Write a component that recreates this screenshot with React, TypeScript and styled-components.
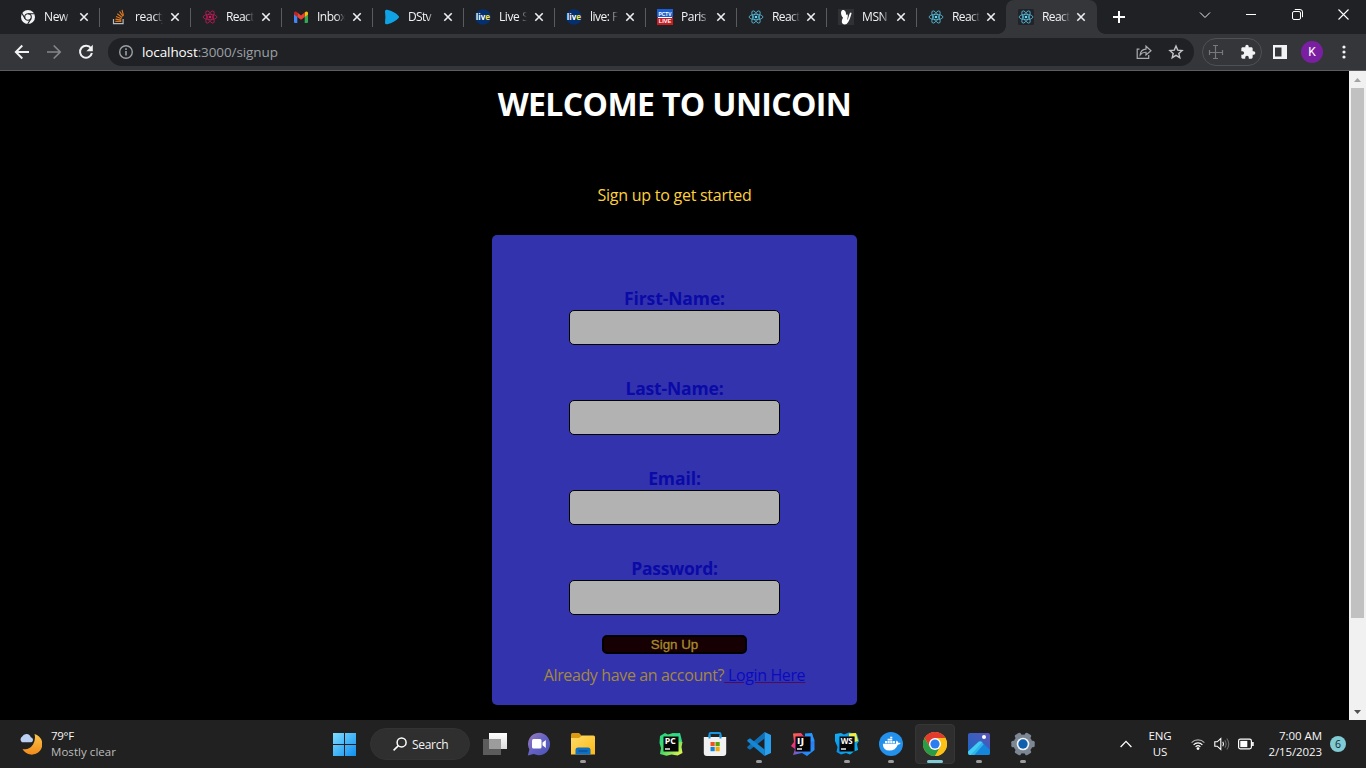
import React from "react";
import styled, { createGlobalStyle } from "styled-components";

const GlobalStyle = createGlobalStyle`
  * { box-sizing: border-box; }
  html, body { margin: 0; padding: 0; background: #000; overflow: hidden; }
  body { font-family: "Open Sans", "Noto Sans", sans-serif; }
  svg { display: block; flex: none; }
`;

const Screen = styled.div`
  width: 1366px;
  height: 768px;
  display: flex;
  flex-direction: column;
  overflow: hidden;
`;

/* ---------- browser tab strip ---------- */

const TabStrip = styled.div`
  height: 34px;
  flex: none;
  display: flex;
  padding-left: 9px;
  background: #202124;
`;

const Tab = styled.div<{ $width: number; $active?: boolean; $divider?: boolean }>`
  position: relative;
  width: ${(p) => p.$width}px;
  height: 34px;
  flex: none;
  display: flex;
  align-items: center;
  margin-left: ${(p) => (p.$active ? -1 : 0)}px;
  padding-left: ${(p) => (p.$active ? 12 : 11)}px;
  border-radius: 8px 8px 0 0;
  background: ${(p) => (p.$active ? "#35363a" : "transparent")};

  &::after {
    content: "";
    position: absolute;
    right: 0;
    top: 8px;
    width: 1px;
    height: 19px;
    background: ${(p) => (p.$divider ? "#5a5b5f" : "transparent")};
  }
`;

const TabFoot = styled.i<{ $side: "left" | "right" }>`
  position: absolute;
  bottom: 0;
  ${(p) => p.$side}: -8px;
  width: 8px;
  height: 8px;
  background: radial-gradient(
    circle at ${(p) => (p.$side === "left" ? "0 0" : "8px 0")},
    transparent 7.5px,
    #35363a 8px
  );
`;

const TabTitle = styled.span<{ $spacing?: number }>`
  width: 32px;
  margin-left: 8px;
  flex: none;
  white-space: nowrap;
  font-size: 12px;
  line-height: 18px;
  letter-spacing: ${(p) => p.$spacing ?? -0.3}px;
  color: #f1f3f4;
  mask-image: linear-gradient(90deg, #000 19px, transparent 28px);
`;

const TabClose = styled.span<{ $tight: boolean }>`
  margin-left: ${(p) => (p.$tight ? 2 : 3)}px;
`;

const NewTab = styled.div`
  width: 28px;
  margin-left: 8px;
  display: grid;
  place-items: center;
`;

const WindowControls = styled.div`
  margin-left: auto;
  height: 29px;
  display: grid;
  grid-template-columns: repeat(4, 46px);
  align-items: center;
  justify-items: center;
`;

/* ---------- toolbar ---------- */

const Toolbar = styled.div`
  height: 37px;
  flex: none;
  display: flex;
  align-items: center;
  padding: 0 6px;
  background: #35363a;
  border-bottom: 1px solid #5c5c60;
`;

const ToolSlot = styled.div<{ $w?: number }>`
  width: ${(p) => p.$w ?? 32}px;
  height: 28px;
  flex: none;
  display: grid;
  place-items: center;
`;

const Omnibox = styled.div`
  width: 1086px;
  height: 28px;
  margin-left: 6px;
  flex: none;
  display: flex;
  align-items: center;
  padding: 0 2px 0 10px;
  border-radius: 14px;
  background: #202124;
`;

const Address = styled.span`
  flex: 1;
  margin-left: 8px;
  font-size: 13.5px;
  letter-spacing: -0.1px;
  color: #9aa0a6;
  b { font-weight: 400; color: #fff; }
`;

const Extensions = styled.div`
  width: 60px;
  height: 28px;
  margin: 0 2px 0 8px;
  flex: none;
  display: flex;
  align-items: center;
  justify-content: space-between;
  padding: 0 5px;
  border: 1px solid #505155;
  border-radius: 14px;
`;

const Avatar = styled.div`
  width: 22px;
  height: 22px;
  border-radius: 50%;
  background: #7b1fa2;
  color: #fff;
  font: 400 12px/22px Roboto, sans-serif;
  text-align: center;
`;

/* ---------- page ---------- */

const Viewport = styled.div`
  height: 649px;
  flex: none;
  display: flex;
  background: #000;
`;

const Page = styled.main`
  flex: 1;
  display: flex;
  flex-direction: column;
  align-items: center;
`;

const Heading = styled.h1`
  margin: 11px 0 0;
  height: 44px;
  font-size: 32px;
  line-height: 44px;
  font-weight: 700;
  letter-spacing: -0.63px;
  white-space: nowrap;
  color: #fff;
`;

const Tagline = styled.p`
  margin: 57px 0 0;
  height: 24px;
  font-size: 16px;
  line-height: 24px;
  letter-spacing: -0.25px;
  color: #ffd03a;
`;

const Card = styled.form`
  width: 365px;
  height: 470px;
  margin-top: 28px;
  padding-top: 51px;
  display: flex;
  flex-direction: column;
  align-items: center;
  border-radius: 5px;
  background: #3333ae;
`;

const Field = styled.label`
  height: 90px;
  display: flex;
  flex-direction: column;
  align-items: center;
  font-size: 17.5px;
  line-height: 24px;
  font-weight: 700;
  color: #0a0aa7;
`;

const FieldName = styled.span<{ $spacing: number }>`
  letter-spacing: ${(p) => p.$spacing}px;
`;

const Input = styled.input`
  width: 211px;
  height: 35px;
  flex: none;
  border: 1px solid #000;
  border-radius: 5px;
  background: #b2b2b2;
  outline: none;
`;

const SubmitButton = styled.button`
  width: 145px;
  height: 19px;
  margin-top: -11px;
  padding: 0;
  border: 2px solid #000;
  border-radius: 5px;
  background: #160003;
  color: #a88b2b;
  font: 400 13.33px/15px "Liberation Sans", sans-serif;
  -webkit-text-stroke: 0.3px #a88b2b;
`;

const Prompt = styled.p`
  margin: 9px 0 0;
  font-size: 16px;
  line-height: 24px;
  letter-spacing: -0.37px;
  white-space: pre;
  color: #a3893f;
`;

const LoginLink = styled.a`
  color: #0a0abf;
  text-decoration: underline;
  text-decoration-color: #4c0d56;
`;

const ScrollTrack = styled.div`
  width: 17px;
  flex: none;
  display: flex;
  flex-direction: column;
  align-items: center;
  background: #f1f1f1;
`;

const ScrollArrow = styled.div`
  height: 17px;
  display: grid;
  place-items: center;
`;

const ScrollThumb = styled.div`
  width: 13px;
  height: 530px;
  margin-bottom: auto;
  background: #c1c1c1;
`;

/* ---------- taskbar ---------- */

const Taskbar = styled.footer`
  height: 48px;
  flex: none;
  display: flex;
  align-items: center;
  background: #212121;
  color: #f4f4f4;
`;

const Weather = styled.div`
  width: 322px;
  flex: none;
  display: flex;
  align-items: center;
  padding-left: 18px;
  gap: 9px;
`;

const Stack = styled.div<{ $align?: string }>`
  display: flex;
  flex-direction: column;
  align-items: ${(p) => p.$align ?? "flex-start"};
  font-size: 11.5px;
  line-height: 16px;
  white-space: nowrap;
`;

const Line = styled.span<{ $spacing?: number; $dim?: boolean }>`
  letter-spacing: ${(p) => p.$spacing ?? -0.2}px;
  color: ${(p) => (p.$dim ? "#bdbdbd" : "#f6f6f6")};
`;

const AppSlot = styled.div<{ $open?: boolean; $focused?: boolean }>`
  position: relative;
  width: 44px;
  height: 48px;
  flex: none;
  display: grid;
  place-items: center;

  &::before {
    content: "";
    position: absolute;
    inset: 4px 2px;
    border-radius: 4px;
    background: ${(p) => (p.$focused ? "#2e2e2e" : "transparent")};
    border: 1px solid ${(p) => (p.$focused ? "#363636" : "transparent")};
  }
  &::after {
    content: "";
    position: absolute;
    bottom: 5px;
    left: 50%;
    transform: translateX(-50%);
    width: ${(p) => (p.$focused ? 16 : 6)}px;
    height: 3px;
    border-radius: 2px;
    background: ${(p) => (p.$focused ? "#80cbd4" : p.$open ? "#9b9b9b" : "transparent")};
  }
  svg { position: relative; }
`;

const SearchPill = styled.div`
  width: 100px;
  height: 32px;
  margin: 0 3px 0 4px;
  flex: none;
  display: flex;
  align-items: center;
  gap: 5px;
  padding-left: 22px;
  border-radius: 16px;
  background: #2f2f2f;
  border: 1px solid #333;
  font-size: 12px;
  letter-spacing: -0.3px;
`;

const Tray = styled.div`
  margin-left: auto;
  display: flex;
  align-items: center;
  padding-right: 20px;
`;

const TrayCell = styled.div<{ $w: number }>`
  width: ${(p) => p.$w}px;
  display: grid;
  place-items: center;
`;

const Clock = styled(Stack)`
  width: 60px;
`;

const Badge = styled.div`
  width: 16px;
  height: 16px;
  margin-left: 8px;
  border-radius: 50%;
  background: #80cbd4;
  color: #12292c;
  font-size: 10.5px;
  line-height: 16px;
  text-align: center;
`;

/* ---------- favicons ---------- */

const ReactMark = ({ color, dark }: { color: string; dark?: boolean }) => (
  <svg width="16" height="16" viewBox="0 0 16 16">
    {dark && <rect width="16" height="16" rx="1.5" fill="#20232a" />}
    <g fill="none" stroke={color} strokeWidth="0.8" opacity="0.85">
      {[0, 60, 120].map((a) => (
        <ellipse key={a} cx="8" cy="8" rx="6.9" ry="2.7" transform={`rotate(${a} 8 8)`} />
      ))}
    </g>
    <circle cx="8" cy="8" r="1.3" fill={color} />
  </svg>
);

const ChromeMono = () => (
  <svg width="16" height="16" viewBox="0 0 16 16">
    <circle cx="8" cy="8" r="7" fill="#f1f3f4" />
    <g stroke="#202124" strokeWidth="1.1" fill="none">
      <circle cx="8" cy="8" r="3.3" />
      <path d="M8 4.7h6.4M5.1 9.6L1.9 4.2M10.9 9.6L7.7 15" />
    </g>
    <circle cx="8" cy="8" r="2.1" fill="#f1f3f4" />
  </svg>
);

const StackMark = () => (
  <svg width="16" height="16" viewBox="0 0 16 16" fill="none">
    <path d="M2.5 10v4.6h9.6V10" stroke="#bcbbbb" strokeWidth="1.2" />
    <path
      d="M4.3 12.4h6M4.4 10.1l5.9 1M5 7.6l5.5 2.2M6.3 4.8l4.8 3.7M8.5 2.4l3.6 4.9M11 .9l1.5 5.8"
      stroke="#e07a20"
      strokeWidth="1.1"
    />
  </svg>
);

const GmailMark = () => (
  <svg width="16" height="16" viewBox="0 0 16 16">
    <path d="M1 4.2L4.3 6.7V14H2.1A1.1 1.1 0 0 1 1 12.9z" fill="#4285f4" />
    <path d="M15 4.2l-3.3 2.5V14h2.2a1.1 1.1 0 0 0 1.1-1.1z" fill="#34a853" />
    <path d="M11.7 3.6l1-.8A1.5 1.5 0 0 1 15 4v1.4l-3.3 2.5z" fill="#fbbc04" />
    <path d="M4.3 7.9V3.6L8 6.4l3.7-2.8v4.3L8 10.7z" fill="#ea4335" />
    <path d="M1 4a1.5 1.5 0 0 1 2.3-1.2l1 .8v4.3L1 5.4z" fill="#c5221f" />
  </svg>
);

const DstvMark = () => (
  <svg width="16" height="16" viewBox="0 0 16 16">
    <path d="M1 2.3Q1 .2 3.2.8Q10.5 2.5 14.6 6.9Q15.6 8 14.6 9.1Q10.5 13.7 3.2 15.3Q1 15.7 1 13.7Q1.8 8 1 2.3z" fill="#0fa3e6" />
  </svg>
);

const LiveMark = () => (
  <svg width="16" height="16" viewBox="0 0 16 16">
    <circle cx="8" cy="8" r="7.8" fill="#04306f" />
    <text x="0.8" y="10.8" fontSize="8" fontWeight="700" fontFamily="Open Sans" fill="#fff" textLength="14.2" lengthAdjust="spacingAndGlyphs">
      liv<tspan fill="#f2e23a">e</tspan>
    </text>
  </svg>
);

const PctvMark = () => (
  <svg width="16" height="16" viewBox="0 0 16 16">
    <rect width="16" height="8.5" fill="#1c5fd0" />
    <rect y="8.5" width="16" height="7.5" fill="#c41d22" />
    <rect x="1" y="8" width="14" height="1" fill="#fff" />
    <text x="1.5" y="7" fontSize="5.5" fontWeight="700" fontFamily="Liberation Sans" fill="#fff" textLength="13" lengthAdjust="spacingAndGlyphs">PCTV</text>
    <text x="1.8" y="13.6" fontSize="5.5" fontWeight="700" fontFamily="Liberation Sans" fill="#fff" textLength="12.5" lengthAdjust="spacingAndGlyphs">LIVE</text>
  </svg>
);

const MsnMark = () => (
  <svg width="16" height="16" viewBox="0 0 16 16">
    <rect width="16" height="16" fill="#303134" />
    <path d="M4.6 1C7 .6 8.4 3.2 8 6.3C8.8 4.6 10 4.9 9.8 7.3L9.2 11.2C10.7 9.6 10.700 6.200 11.800 4.300C12.800 2.800 14 3.700 13.300 5.200C12.300 8.500 11.200 12.600 8.600 15C6.600 16 4 15.300 3.800 13.100C3.700 11.200 4.600 9.800 5 8.500C2.800 6.800 2.200 1.800 4.600 1z" fill="#fff" />
  </svg>
);

const CloseGlyph = () => (
  <svg width="10" height="10" viewBox="0 0 10 10">
    <path d="M1.3 1.3l7.4 7.4M8.7 1.3L1.3 8.7" stroke="#eceef0" strokeWidth="1.6" />
  </svg>
);

type TabInfo = { icon: React.ReactNode; title: string; width: number; spacing?: number };

const tabs: TabInfo[] = [
  { icon: <ChromeMono />, title: "New", width: 91, spacing: -0.4 },
  { icon: <StackMark />, title: "reactj", width: 91, spacing: -0.3 },
  { icon: <ReactMark color="#d81b60" />, title: "React", width: 91, spacing: -0.6 },
  { icon: <GmailMark />, title: "Inbox", width: 91, spacing: -0.5 },
  { icon: <DstvMark />, title: "DStv", width: 91, spacing: -0.7 },
  { icon: <LiveMark />, title: "Live S", width: 91, spacing: -0.4 },
  { icon: <LiveMark />, title: "live: F", width: 91, spacing: -0.5 },
  { icon: <PctvMark />, title: "Paris", width: 91, spacing: -0.5 },
  { icon: <ReactMark color="#61dafb" />, title: "React", width: 90, spacing: -0.6 },
  { icon: <MsnMark />, title: "MSN", width: 90, spacing: -0.4 },
  { icon: <ReactMark color="#61dafb" />, title: "React", width: 90, spacing: -0.6 },
  { icon: <ReactMark color="#61dafb" dark />, title: "React", width: 91, spacing: -0.6 },
];

/* ---------- taskbar icons ---------- */

const WindowsIcon = () => (
  <svg width="24" height="24" viewBox="0 0 24 24">
    <defs>
      <linearGradient id="win" x1="0" y1="0" x2="1" y2="1">
        <stop offset="0" stopColor="#7fdcff" />
        <stop offset="1" stopColor="#0e8ff0" />
      </linearGradient>
    </defs>
    <path d="M1 1h11v11H1zM13 1h11v11H13zM1 13h11v11H1zM13 13h11v11H13z" fill="url(#win)" />
  </svg>
);

const TaskViewIcon = () => (
  <svg width="24" height="24" viewBox="0 0 24 24">
    <defs>
      <linearGradient id="tv" x1="0" y1="0" x2="0" y2="1">
        <stop offset="0" stopColor="#fff" />
        <stop offset="1" stopColor="#dcdcdc" />
      </linearGradient>
    </defs>
    <path d="M6 1h18v16H6z" fill="url(#tv)" />
    <path d="M0 7h18v16H0z" fill="#5c5c5c" />
    <path d="M6 7h12v10H6z" fill="#9c9c9c" />
  </svg>
);

const ChatIcon = () => (
  <svg width="24" height="24" viewBox="0 0 24 24">
    <defs>
      <linearGradient id="chat" x1="0" y1="0" x2="1" y2="1">
        <stop offset="0" stopColor="#a07ab8" />
        <stop offset="0.5" stopColor="#6462c4" />
        <stop offset="1" stopColor="#4a50b4" />
      </linearGradient>
    </defs>
    <path d="M12 .8a11.2 11.2 0 1 1-5.2 21.2L.8 23.500l1.600-6A11.200 11.200 0 0 1 12 .8z" fill="url(#chat)" />
    <rect x="5" y="7" width="9.5" height="9.6" rx="1.5" fill="#fff" />
    <path d="M15.500 10.500l3.300-2.600v8l-3.300-2.600z" fill="#fff" />
  </svg>
);

const FolderIcon = () => (
  <svg width="24" height="24" viewBox="0 0 24 24">
    <defs>
      <linearGradient id="fold" x1="0" y1="0" x2="1" y2="1">
        <stop offset="0" stopColor="#ffdc6a" />
        <stop offset="1" stopColor="#fbb916" />
      </linearGradient>
    </defs>
    <path d="M0 2.500Q0 1 1.500 1H8l2.500 2.500V8H0z" fill="#dc9a10" />
    <path d="M0 6h8l3-2.500h11.500Q24 3.500 24 5v17.500H0z" fill="url(#fold)" />
    <path d="M4.500 22.500V18Q4.500 15.500 7 15.500h10Q19.500 15.500 19.500 18v4.500z" fill="#0f6fc0" />
    <path d="M7.500 19h9" stroke="#0a4c94" strokeWidth="1.3" />
  </svg>
);

type JetBrainsProps = { id: string; label: string; labelWidth: number; stops: string[]; accent: string; outline: string };

const JetBrains = ({ id, label, labelWidth, stops, accent, outline }: JetBrainsProps) => (
  <svg width="24" height="24" viewBox="0 0 24 24">
    <defs>
      <linearGradient id={id} x1="0" y1="0" x2="1" y2="1">
        {stops.map((c, i) => (
          <stop key={i} offset={i / (stops.length - 1)} stopColor={c} />
        ))}
      </linearGradient>
    </defs>
    <path d={outline} fill={`url(#${id})`} />
    <path d="M14 1.500l7-.5 2 8-3.500 1V4.500H14z" fill={accent} />
    <path d="M4.500 4.500h15v15h-15z" fill="#050505" />
    <text x="5.7" y="12" fontSize="8" fontWeight="700" fontFamily="Open Sans" fill="#fff" textLength={labelWidth} lengthAdjust="spacingAndGlyphs">
      {label}
    </text>
    <path d="M6 17h5" stroke="#fff" strokeWidth="1.4" />
  </svg>
);

const StoreIcon = () => (
  <svg width="24" height="24" viewBox="0 0 24 24">
    <path d="M6.500 7V2.200Q6.500 1 7.700 1h8.600q1.200 0 1.200 1.200V7" fill="none" stroke="#1897e0" strokeWidth="2" />
    <path d="M.8 5h22.400v16q0 3-3 3H3.800q-3 0-3-3z" fill="#f1f1f1" />
    <path d="M7.500 10h4.200v4.200H7.500z" fill="#f25022" />
    <path d="M12.500 10h4.200v4.200h-4.200z" fill="#57a300" />
    <path d="M7.500 15h4.200v4.200H7.500z" fill="#0a84dc" />
    <path d="M12.500 15h4.200v4.200h-4.200z" fill="#f8a800" />
    <path d="M6.500 6.500V3M17.500 6.500V3" stroke="#1897e0" strokeWidth="2" />
  </svg>
);

const CodeIcon = () => (
  <svg width="24" height="24" viewBox="0 0 24 24">
    <path d="M17.500 6.500L3 17.800 .3 16V14.800L17.500 0z" fill="#0f70b8" />
    <path d="M17.500 17.500L3 6.200.3 8v1.200L17.500 24z" fill="#1486d4" />
    <path d="M17.500 0L24 3v18l-6.500 3z" fill="#29a0ee" />
  </svg>
);

const DockerIcon = () => (
  <svg width="24" height="24" viewBox="0 0 24 24">
    <circle cx="12" cy="12" r="12" fill="#2391ec" />
    <path d="M3.800 11.800h13.300q-.6-1.800.6-3.200 1.300.8 1.500 2.200 1.500-.3 2.500.3-.8 1.500-2.900 1.600-2.300 5.900-8.300 5.900-6.500 0-6.700-6.800z" fill="#fff" />
    <path d="M6 9h2.100v2.200H6zM8.600 9h2.100v2.200H8.600zM11.200 9h2.100v2.200h-2.100zM13.800 9h2.100v2.200h-2.100zM8.600 6.800h4.700v1.700H8.600zM11.200 4.800h2.100v1.500h-2.100z" fill="#fff" />
  </svg>
);

const ChromeIcon = () => (
  <svg width="24" height="24" viewBox="0 0 24 24">
    <circle cx="12" cy="12" r="12" fill="#fbc116" />
    <path d="M12 6h10.400A12 12 0 0 0 1.600 6l5.200 9z" fill="#e33b2e" />
    <path d="M1.600 6A12 12 0 0 0 12 24l5.200-9H6.800z" fill="#2a9b47" />
    <path d="M12 24A12 12 0 0 0 22.400 6H12l5.200 9z" fill="#fbc116" />
    <circle cx="12" cy="12" r="6" fill="#fff" />
    <circle cx="12" cy="12" r="4.6" fill="#2c7df0" />
  </svg>
);

const PhotosIcon = () => (
  <svg width="24" height="24" viewBox="0 0 24 24">
    <defs>
      <linearGradient id="ph" x1="0" y1="1" x2="1" y2="0">
        <stop offset="0" stopColor="#1666c4" />
        <stop offset="1" stopColor="#5b56b8" />
      </linearGradient>
      <clipPath id="phc"><rect x="1" y="1" width="22" height="22" rx="2" /></clipPath>
    </defs>
    <g clipPath="url(#phc)">
      <rect x="1" y="1" width="22" height="22" fill="url(#ph)" />
      <path d="M11 10.500q2.300-2 4.500 0L25 20v5H5z" fill="#1486dc" />
      <path d="M0 20.500L11 10.200q2.200-1.900 4.500.2L3.500 24H0z" fill="#42cdf2" />
      <path d="M3 24L15.200 10.700l1.500 1.500L6.500 24z" fill="#30b4ea" />
    </g>
    <circle cx="17" cy="5" r="2" fill="#fff" />
  </svg>
);

const SettingsIcon = () => (
  <svg width="24" height="24" viewBox="0 0 24 24">
    <g fill="#7c8793">
      <circle cx="12" cy="12" r="9.6" />
      {[0, 60, 120].map((a) => (
        <rect key={a} x="0.3" y="8.7" width="23.4" height="6.6" rx="1.6" transform={`rotate(${a} 12 12)`} />
      ))}
    </g>
    <circle cx="12" cy="12" r="6.3" fill="#f0f3f6" />
    <circle cx="12" cy="12" r="4.7" fill="#0e5fae" />
  </svg>
);

const MoonIcon = () => (
  <svg width="24" height="24" viewBox="0 0 24 24">
    <defs>
      <linearGradient id="moon" x1="0" y1="0" x2="0" y2="1">
        <stop offset="0" stopColor="#ffc64a" />
        <stop offset="1" stopColor="#f08a1a" />
      </linearGradient>
    </defs>
    <path d="M16.500 2A10.500 10.500 0 1 1 4.500 17Q11 18.500 15 12.500Q18 7 16.500 2z" fill="url(#moon)" />
    <path d="M4 10.200a3.300 3.300 0 0 1 .2-5.600 4.600 4.600 0 0 1 8.600.6 2.600 2.600 0 0 1 .5 5z" fill="#bcd0f3" />
  </svg>
);

const fields = [
  { name: "First-Name:", type: "text", spacing: -0.1 },
  { name: "Last-Name:", type: "text", spacing: -0.15 },
  { name: "Email:", type: "email", spacing: -0.1 },
  { name: "Password:", type: "password", spacing: -0.25 },
];

export default function App() {
  return (
    <Screen>
      <GlobalStyle />
      <TabStrip>
        {tabs.map((t, i) => {
          const active = i === tabs.length - 1;
          return (
            <Tab key={i} $width={t.width} $active={active} $divider={i < tabs.length - 2}>
              {active && <TabFoot $side="left" />}
              {active && <TabFoot $side="right" />}
              {t.icon}
              <TabTitle $spacing={t.spacing}>{t.title}</TabTitle>
              <TabClose $tight={i > 7}><CloseGlyph /></TabClose>
            </Tab>
          );
        })}
        <NewTab>
          <svg width="12" height="12" viewBox="0 0 12 12"><path d="M6 0v12M0 6h12" stroke="#fff" strokeWidth="2" /></svg>
        </NewTab>
        <WindowControls>
          <svg width="12" height="12" viewBox="0 0 12 12" fill="none" stroke="#e8eaed"><path d="M1 3.500l5 5 5-5" /></svg>
          <svg width="10" height="11" viewBox="0 0 10 11"><path d="M0 5.500h10" stroke="#fff" /></svg>
          <svg width="11" height="11" viewBox="0 0 11 11" fill="none" stroke="#fff"><rect x=".5" y="2.5" width="8" height="8" rx="1.5" /><path d="M2.800.5h5.200q2.500 0 2.500 2.500v5.200" /></svg>
          <svg width="11" height="11" viewBox="0 0 11 11"><path d="M.5.5l10 10M10.500.5l-10 10" stroke="#fff" strokeWidth="1.1" /></svg>
        </WindowControls>
      </TabStrip>

      <Toolbar>
        <ToolSlot>
          <svg width="16" height="16" viewBox="0 0 16 16" fill="none" stroke="#f1f3f4" strokeWidth="1.9"><path d="M15 8H2M8.300 1.500L1.800 8l6.500 6.500" /></svg>
        </ToolSlot>
        <ToolSlot>
          <svg width="16" height="16" viewBox="0 0 16 16" fill="none" stroke="#84868a" strokeWidth="1.7"><path d="M1 8h13M7.700 1.500L14.200 8l-6.500 6.500" /></svg>
        </ToolSlot>
        <ToolSlot>
          <svg width="16" height="16" viewBox="0 0 16 16" fill="none"><path d="M13 4.300A6 6 0 1 0 13.900 9" stroke="#f1f3f4" strokeWidth="2" /><path d="M14.800.8v6.400H8.400z" fill="#f1f3f4" /></svg>
        </ToolSlot>
        <Omnibox>
          <svg width="16" height="16" viewBox="0 0 16 16"><circle cx="8" cy="8" r="6.3" fill="none" stroke="#9aa0a6" strokeWidth="1.4" /><path d="M8 7v4.500M8 4.200v1.700" stroke="#9aa0a6" strokeWidth="1.6" /></svg>
          <Address><b>localhost</b>:3000/signup</Address>
          <ToolSlot>
            <svg width="16" height="16" viewBox="0 0 16 16" fill="none" stroke="#a9adb1" strokeWidth="1.2"><path d="M3.500 5.200H1.200v9.200h11.500V11" /><path d="M4.200 10.800Q4.600 5.500 10 5.100V2.200l5 4.500-5 4.300V8.300Q6.500 8 4.200 10.800z" /></svg>
          </ToolSlot>
          <ToolSlot>
            <svg width="16" height="16" viewBox="0 0 16 16" fill="none" stroke="#c3c6c9" strokeWidth="1.4"><path d="M8 2l1.700 4.100 4.400.4-3.300 2.900 1 4.300L8 11.400l-3.800 2.300 1-4.300L1.900 6.500l4.400-.4z" /></svg>
          </ToolSlot>
        </Omnibox>
        <Extensions>
          <svg width="16" height="16" viewBox="0 0 16 16" fill="none" stroke="#77787b" strokeWidth="1.2"><path d="M7.500 1v14M1 8.500h14M5 1.500h2M8 1.500h2M5 14.500h2M8 14.500h2M1.500 6v5M14.500 6v5" /></svg>
          <svg width="16" height="16" viewBox="0 0 24 24" fill="#f1f3f4"><path d="M20.500 11H19V7c0-1.100-.9-2-2-2h-4V3.500a2.500 2.500 0 0 0-5 0V5H4c-1.100 0-2 .9-2 2v3.800h1.500a2.700 2.700 0 0 1 0 5.400H2V20c0 1.100.9 2 2 2h3.800v-1.500a2.700 2.700 0 0 1 5.400 0V22H17c1.100 0 2-.9 2-2v-4h1.500a2.500 2.500 0 0 0 0-5z" /></svg>
        </Extensions>
        <ToolSlot>
          <svg width="14" height="14" viewBox="0 0 14 14"><path fillRule="evenodd" d="M0 0h14v14H0zM2 2.500v9h6.500v-9z" fill="#f1f3f4" /></svg>
        </ToolSlot>
        <ToolSlot><Avatar>K</Avatar></ToolSlot>
        <ToolSlot>
          <svg width="4" height="14" viewBox="0 0 4 14" fill="#f1f3f4"><circle cx="2" cy="2" r="1.6" /><circle cx="2" cy="7" r="1.6" /><circle cx="2" cy="12" r="1.6" /></svg>
        </ToolSlot>
      </Toolbar>

      <Viewport>
        <Page>
          <Heading>WELCOME TO UNICOIN</Heading>
          <Tagline>Sign up to get started</Tagline>
          <Card onSubmit={(e) => e.preventDefault()}>
            {fields.map((f) => (
              <Field key={f.name}>
                <FieldName $spacing={f.spacing}>{f.name}</FieldName>
                <Input type={f.type} />
              </Field>
            ))}
            <SubmitButton type="submit">Sign Up</SubmitButton>
            <Prompt>Already have an account?<LoginLink> Login Here</LoginLink></Prompt>
          </Card>
        </Page>
        <ScrollTrack>
          <ScrollArrow><svg width="7" height="4" viewBox="0 0 7 4"><path d="M0 4L3.500 0 7 4z" fill="#a3a3a3" /></svg></ScrollArrow>
          <ScrollThumb />
          <ScrollArrow><svg width="7" height="4" viewBox="0 0 7 4"><path d="M0 0h7L3.500 4z" fill="#505050" /></svg></ScrollArrow>
        </ScrollTrack>
      </Viewport>

      <Taskbar>
        <Weather>
          <MoonIcon />
          <Stack>
            <Line $spacing={-0.3}>79°F</Line>
            <Line $dim $spacing={0.05}>Mostly clear</Line>
          </Stack>
        </Weather>
        <AppSlot><WindowsIcon /></AppSlot>
        <SearchPill>
          <svg width="14" height="14" viewBox="0 0 14 14" fill="none" stroke="#fff" strokeWidth="1.5"><circle cx="8.6" cy="5.4" r="4.5" /><path d="M5.400 8.600L.6 13.400" /></svg>
          Search
        </SearchPill>
        <AppSlot><TaskViewIcon /></AppSlot>
        <AppSlot><ChatIcon /></AppSlot>
        <AppSlot $open><FolderIcon /></AppSlot>
        <AppSlot />
        <AppSlot>
          <JetBrains id="pc" label="PC" labelWidth={11} stops={["#21d789", "#4cd964", "#fcf84a"]} accent="#2fd98a" outline="M1 4l5-3 3 1.500 5-1.500 6 1 1 6 2.500 2-1 5 1 6-5 2.500-6-1-5 1.200L1 22l1-6-1.500-5z" />
        </AppSlot>
        <AppSlot><StoreIcon /></AppSlot>
        <AppSlot $open><CodeIcon /></AppSlot>
        <AppSlot>
          <JetBrains id="ij" label="IJ" labelWidth={7.5} stops={["#fe7a3c", "#f0307a", "#2a7df5", "#1fa0ff"]} accent="#1f9bff" outline="M2 1.500l8-.5 3 3.500 8-2.500 2.500 6v10L16 24l-5-3-9 2 2-6-4-3 3-4z" />
        </AppSlot>
        <AppSlot $open>
          <JetBrains id="ws" label="WS" labelWidth={12} stops={["#12b5f5", "#0a8fe8", "#07c3f2"]} accent="#f5ee3c" outline="M0 2l6-1 3 1.500 5-2 8 1.500 2 7-2 3 1 6-4 1.500-4 3-4-1.500-5 1.500L1.500 20l1-5L0 9z" />
        </AppSlot>
        <AppSlot $open><DockerIcon /></AppSlot>
        <AppSlot $focused><ChromeIcon /></AppSlot>
        <AppSlot $open><PhotosIcon /></AppSlot>
        <AppSlot $open><SettingsIcon /></AppSlot>
        <Tray>
          <TrayCell $w={24}>
            <svg width="12" height="8" viewBox="0 0 12 8" fill="none" stroke="#fff" strokeWidth="1.3"><path d="M.6 7L6 1.400 11.400 7" /></svg>
          </TrayCell>
          <TrayCell $w={44}>
            <Stack $align="center"><Line $spacing={-0.1}>ENG</Line><Line>US</Line></Stack>
          </TrayCell>
          <TrayCell $w={32}>
            <svg width="14" height="14" viewBox="0 0 14 14" fill="none" strokeWidth="1.2"><path d="M.6 5.600a9 9 0 0 1 12.800 0" stroke="#aaa" /><path d="M2.600 7.800a6.200 6.200 0 0 1 8.800 0M4.600 9.800a3.400 3.400 0 0 1 4.800 0" stroke="#fff" /><circle cx="7" cy="11.6" r="1.4" fill="#fff" /></svg>
          </TrayCell>
          <TrayCell $w={16}>
            <svg width="16" height="14" viewBox="0 0 16 14" fill="none" strokeWidth="1.1"><path d="M.8 4.800h2.400L6.800 1.500v11L3.200 9.200H.8z" stroke="#fff" /><path d="M8.800 4.800q1.400 2.200 0 4.400" stroke="#fff" /><path d="M10.800 3.200q2.600 3.800 0 7.600M12.800 1.500q4 5.500 0 11" stroke="#6b6b6b" /></svg>
          </TrayCell>
          <TrayCell $w={32}>
            <svg width="16" height="12" viewBox="0 0 16 12"><rect x=".6" y="1.1" width="12.8" height="9.8" rx="1.8" fill="none" stroke="#fff" strokeWidth="1.2" /><rect x="2.3" y="2.9" width="7" height="6.2" fill="#fff" /><path d="M14.900 4v4" stroke="#fff" strokeWidth="1.6" /></svg>
          </TrayCell>
          <Clock $align="flex-end">
            <Line $spacing={-0.05}>7:00 AM</Line>
            <Line $spacing={-0.1}>2/15/2023</Line>
          </Clock>
          <Badge>6</Badge>
        </Tray>
      </Taskbar>
    </Screen>
  );
}
